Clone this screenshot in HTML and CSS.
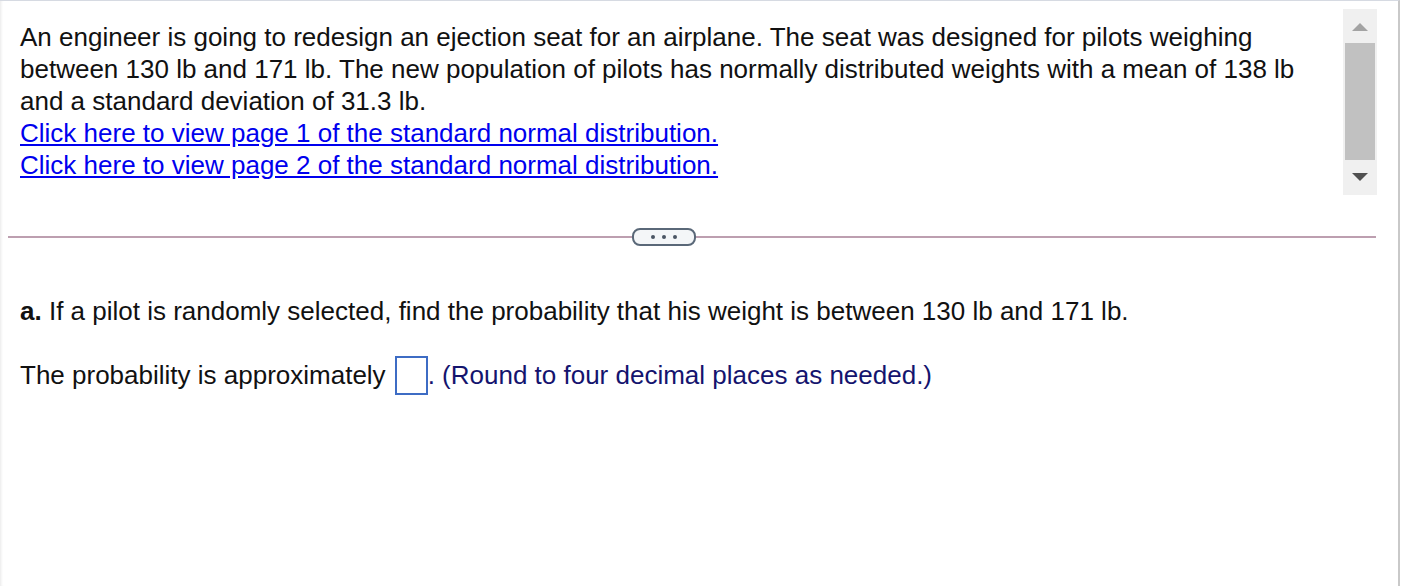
FILE: index.html
```html
<!DOCTYPE html>
<html>
<head>
<meta charset="utf-8">
<link rel="stylesheet" href="styles.css">
</head>
<body>
<div class="frame">
  <div class="top">
    <div class="stem">
      <p>An engineer is going to redesign an ejection seat for an airplane. The seat was designed for pilots weighing between 130 lb and 171 lb. The new population of pilots has normally distributed weights with a mean of 138 lb and a standard deviation of 31.3 lb.</p>
      <a href="#" class="link">Click here to view page 1 of the standard normal distribution.</a>
      <a href="#" class="link">Click here to view page 2 of the standard normal distribution.</a>
    </div>
    <div class="scrollbar">
      <div class="arrow up"></div>
      <div class="thumb"></div>
      <div class="arrow down"></div>
    </div>
  </div>
  <div class="divider">
    <div class="line left"></div>
    <button class="more"><span></span><span></span><span></span></button>
    <div class="line"></div>
  </div>
  <div class="question">
    <p class="q"><b>a.</b> If a pilot is randomly selected, find the probability that his weight is between 130 lb and 171 lb.</p>
    <p class="ans">The probability is approximately <span class="box"></span><span class="hint">. (Round to four decimal places as needed.)</span></p>
  </div>
</div>
</body>
</html>
```
FILE: styles.css
```css
html, body {
  margin: 0;
  padding: 0;
  background: #fff;
}
body {
  font-family: "Liberation Sans", Arial, sans-serif;
  color: #111;
  width: 1401px;
  height: 586px;
  overflow: hidden;
}
.frame {
  box-sizing: border-box;
  width: 1400px;
  height: 586px;
  border-top: 1px solid #d6dae2;
  border-right: 2px solid #c9c9c9;
  box-shadow: inset 3px 0 3px -2px #e8e8e8;
}
.top {
  display: flex;
  justify-content: space-between;
  padding: 8px 21px 0 20px;
  height: 187px;
}
.stem {
  font-size: 26px;
  line-height: 32px;
  padding-top: 12px;
  width: 1300px;
}
.stem p {
  margin: 0;
}
.link {
  display: block;
  color: #0000ee;
  text-decoration: underline;
  text-underline-offset: 2px;
}
.scrollbar {
  width: 34px;
  height: 186px;
  background: #f0f0f0;
  display: flex;
  flex-direction: column;
  align-items: center;
}
.arrow {
  width: 0;
  height: 0;
  border-left: 8px solid transparent;
  border-right: 8px solid transparent;
}
.arrow.up {
  border-bottom: 8px solid #a3a3a3;
  margin-top: 14px;
  margin-bottom: 12px;
}
.thumb {
  width: 30px;
  height: 117px;
  background: #c1c1c1;
}
.arrow.down {
  border-top: 8px solid #505050;
  margin-top: 13px;
}
.divider {
  display: flex;
  align-items: center;
  margin: 32px 22px 0 8px;
}
.line {
  flex: 1;
  height: 2px;
  background: #bd9fb0;
}
.line.left {
  flex: 0 0 624px;
}
.more {
  width: 64px;
  height: 18px;
  box-sizing: border-box;
  border: 2px solid #5a6878;
  border-radius: 8px;
  background: #f4f6f8;
  padding: 0;
  margin: 0;
  display: flex;
  align-items: center;
  justify-content: center;
  gap: 7px;
}
.more span {
  width: 4px;
  height: 4px;
  border-radius: 50%;
  background: #4a5564;
}
.question {
  padding: 0 20px;
  font-size: 26px;
}
.q {
  margin: 49px 0 0;
  line-height: 32px;
}
.q b {
  font-weight: bold;
}
.ans {
  margin: 28px 0 0;
  line-height: 40px;
  display: flex;
  align-items: center;
}
.box {
  display: inline-block;
  box-sizing: border-box;
  width: 33px;
  height: 39px;
  border: 2px solid #3d6cc4;
  margin-left: 9px;
}
.hint {
  color: #14146e;
}
```
